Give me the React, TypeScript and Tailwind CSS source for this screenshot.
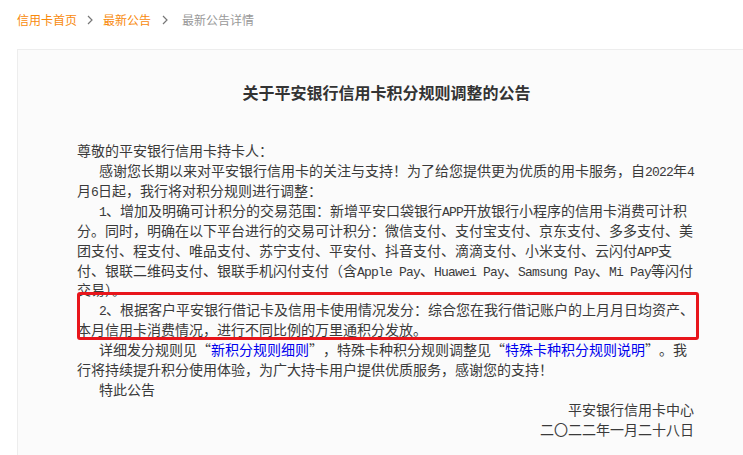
import type { ReactNode } from 'react';

function Latin({ children }: { children: ReactNode }) {
  return <span className="font-['Liberation_Mono',monospace] text-[13px] tracking-[-0.8px] leading-none">{children}</span>;
}

function Chevron() {
  return (
    <svg width="6" height="10" viewBox="0 0 6 10" className="shrink-0">
      <path d="M1 1 L5 5 L1 9" fill="none" stroke="#777" strokeWidth="1.2" />
    </svg>
  );
}

function Line({ indent, children }: { indent?: boolean; children: ReactNode }) {
  return <div className={indent ? 'h-[19.93px] pl-[22px] whitespace-nowrap' : 'h-[19.93px] whitespace-nowrap'}>{children}</div>;
}

function Link({ children }: { children: ReactNode }) {
  return <span className="text-[#0000ee]">{children}</span>;
}

// full-width curly quotes, as the page's CJK font draws them
function OpenQ() {
  return <span className="inline-block w-[14px] text-right">“</span>;
}
function CloseQ() {
  return <span className="inline-block w-[14px] text-left">”</span>;
}

export default function App() {
  return (
    <div className="w-[743px] h-[455px] overflow-hidden bg-white font-['Noto_Sans_CJK_SC',sans-serif]">
      <div className="flex items-center h-[20px] mt-[10px] pl-[17px] text-[12px] leading-[20px]">
        <span className="text-[#f88a0c]">信用卡首页</span>
        <span className="mx-[10px]"><Chevron /></span>
        <span className="text-[#f88a0c]">最新公告</span>
        <span className="ml-[11px] mr-[14px]"><Chevron /></span>
        <span className="text-[#999]">最新公告详情</span>
      </div>

      <div className="mt-[19px] ml-[17px] w-[739px] h-[420px] border border-[#ededed] bg-[#fbfbfb] px-[59px] pt-[32px]">
        <h1 className="text-center text-[16px] leading-[20px] font-bold text-[#333]">关于平安银行信用卡积分规则调整的公告</h1>

        <div className="mt-[39px] text-[14px] leading-[19.93px] text-[#3a3a3a]">
          <Line>尊敬的平安银行信用卡持卡人：</Line>
          <Line indent>感谢您长期以来对平安银行信用卡的关注与支持！为了给您提供更为优质的用卡服务，自<Latin>2022</Latin>年<Latin>4</Latin></Line>
          <Line>月<Latin>6</Latin>日起，我行将对积分规则进行调整：</Line>
          <Line indent><Latin>1</Latin>、增加及明确可计积分的交易范围：新增平安口袋银行<Latin>APP</Latin>开放银行小程序的信用卡消费可计积</Line>
          <Line>分。同时，明确在以下平台进行的交易可计积分：微信支付、支付宝支付、京东支付、多多支付、美</Line>
          <Line>团支付、程支付、唯品支付、苏宁支付、平安付、抖音支付、滴滴支付、小米支付、云闪付<Latin>APP</Latin>支</Line>
          <Line>付、银联二维码支付、银联手机闪付支付（含<Latin>Apple Pay</Latin>、<Latin>Huawei Pay</Latin>、<Latin>Samsung Pay</Latin>、<Latin>Mi Pay</Latin>等闪付</Line>
          <Line>交易）。</Line>

          <div className="relative">
            <span className="absolute left-0 top-[-8px] bottom-0 w-[622px] border-[3px] border-[#e8151b] rounded-[3px]" />
            <Line indent><Latin>2</Latin>、根据客户平安银行借记卡及信用卡使用情况发分：综合您在我行借记账户的上月月日均资产、</Line>
            <Line>本月信用卡消费情况，进行不同比例的万里通积分发放。</Line>
          </div>

          <Line indent>详细发分规则见<OpenQ /><Link>新积分规则细则</Link><CloseQ />，特殊卡种积分规则调整见<OpenQ /><Link>特殊卡种积分规则说明</Link><CloseQ />。我</Line>
          <Line>行将持续提升积分使用体验，为广大持卡用户提供优质服务，感谢您的支持！</Line>
          <Line indent>特此公告</Line>
          <div className="h-[19.93px] text-right pr-[2px]">平安银行信用卡中心</div>
          <div className="h-[19.93px] text-right pr-[2px]">二〇二二年一月二十八日</div>
        </div>
      </div>
    </div>
  );
}
